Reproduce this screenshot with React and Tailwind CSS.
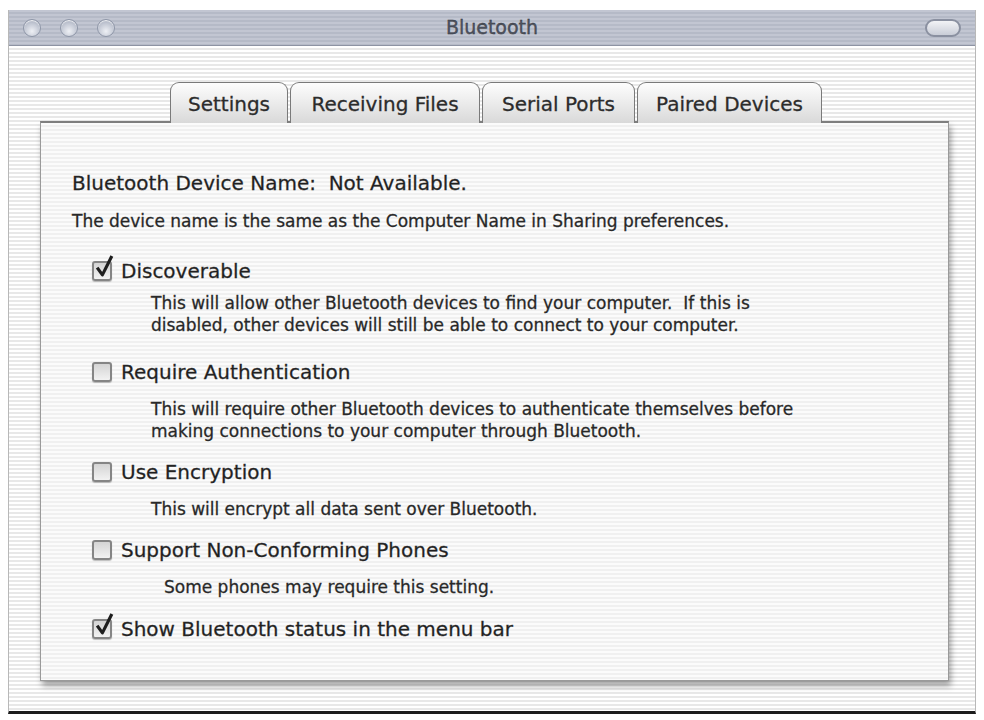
const stripes =
  "bg-[repeating-linear-gradient(180deg,#ffffff_0px,#ffffff_2px,#e8e8e8_2px,#e8e8e8_4px)]";

function Light() {
  return (
    <div className="h-[18px] w-[18px] rounded-full border border-[#8e96a8] bg-[radial-gradient(circle_at_50%_70%,#eef0f5_0%,#c3c8d4_55%,#9aa1b2_100%)] shadow-[inset_0_1px_1px_rgba(255,255,255,0.9)]" />
  );
}

function Check({ checked }) {
  return (
    <div className="relative h-[20px] w-[20px] shrink-0 rounded-[3px] border-2 border-[#858585] bg-[linear-gradient(180deg,#d4d4d4,#f2f2f2)] shadow-[0_1px_1px_rgba(0,0,0,0.25)]">
      {checked && (
        <svg viewBox="0 0 20 22" className="absolute -top-[9px] left-[0px] h-[25px] w-[21px]">
          <path d="M3 12 L8 19 L17 1" fill="none" stroke="#1e1e1e" strokeWidth="3" strokeLinejoin="round" />
        </svg>
      )}
    </div>
  );
}

function Option({ label, checked, lines, indent = "pl-[59px]", top, descTop = "mt-[14px]" }) {
  return (
    <div className={`pl-[20px] ${top}`}>
      <div className="flex items-center gap-[9px] text-[20px] leading-[24px] text-[#1f1f1f]">
        <Check checked={checked} />
        <span>{label}</span>
      </div>
      {lines && (
        <div className={`${descTop} ${indent} text-[17px] leading-[22px] text-[#262626]`}>
          {lines.map((l) => (
            <div key={l} className="whitespace-pre">{l}</div>
          ))}
        </div>
      )}
    </div>
  );
}

const tabs = [
  { name: "Settings", w: 118 },
  { name: "Receiving Files", w: 190 },
  { name: "Serial Ports", w: 153 },
  { name: "Paired Devices", w: 185 },
];

export default function App() {
  return (
    <div
      className="h-[720px] w-[984px] bg-white pt-[10px] pl-[8px] [-webkit-text-stroke:0.3px_#333]"
      style={{ fontFamily: '"DejaVu Sans", "Open Sans", sans-serif' }}
    >
      <div className="flex h-[704px] w-[968px] flex-col border-x border-[#b8b8b8] border-b-[3px] border-b-[#1c1c1c]">
        {/* title bar */}
        <div className="relative flex h-[36px] shrink-0 items-center border-b border-[#8d93a3] bg-[repeating-linear-gradient(180deg,#c2c6d2_0px,#c2c6d2_2px,#b5bac7_2px,#b5bac7_4px)] px-[14px]">
          <div className="flex gap-[19px]">
            <Light />
            <Light />
            <Light />
          </div>
          <div className="absolute inset-x-0 top-0 flex h-full items-center justify-center text-[19px] text-[#4c5262]">
            Bluetooth
          </div>
          <div className="ml-auto h-[18px] w-[36px] rounded-full border-2 border-[#8a90a0] bg-[linear-gradient(180deg,#f2f3f6,#c9cdd7)]" />
        </div>

        {/* body */}
        <div className={`flex-1 ${stripes} pl-[31px] pr-[27px] pt-[36px]`}>
          <div className="flex pl-[130px]">
            {tabs.map((t, i) => (
              <div
                key={t.name}
                style={{ width: t.w }}
                className={`relative z-10 -mb-[2px] flex h-[41px] items-center justify-center rounded-t-[9px] border border-b-0 border-[#7a7a7a] bg-[linear-gradient(180deg,#fdfdfd_0%,#ededed_45%,#d9d9d9_100%)] pt-[2px] text-[20px] text-[#2b2b2b] ${i > 0 ? "ml-[2px]" : ""}`}
              >
                {t.name}
              </div>
            ))}
          </div>
          <div className="h-[560px] w-[909px] border border-[#9a9a9a] border-t-2 border-t-[#7f7f7f] bg-[repeating-linear-gradient(180deg,#fbfbfb_0px,#fbfbfb_2px,#f0f0f0_2px,#f0f0f0_4px)] pl-[31px] pt-[48px] shadow-[2px_5px_6px_rgba(0,0,0,0.35)]">
            <div className="text-[20px] leading-[24px] text-[#1f1f1f]">
              Bluetooth Device Name:&nbsp; Not Available.
            </div>
            <div className="mt-[15px] text-[17px] leading-[22px] text-[#262626]">
              The device name is the same as the Computer Name in Sharing preferences.
            </div>
            <div className="flex flex-col">
              <Option
                top="mt-[27px]"
                descTop="mt-[9px]"
                label="Discoverable"
                checked
                lines={[
                  "This will allow other Bluetooth devices to find your computer.  If this is",
                  "disabled, other devices will still be able to connect to your computer.",
                ]}
              />
              <Option
                top="mt-[24px]"
                label="Require Authentication"
                lines={[
                  "This will require other Bluetooth devices to authenticate themselves before",
                  "making connections to your computer through Bluetooth.",
                ]}
              />
              <Option
                top="mt-[18px]"
                label="Use Encryption"
                lines={["This will encrypt all data sent over Bluetooth."]}
              />
              <Option
                top="mt-[18px]"
                label="Support Non-Conforming Phones"
                indent="pl-[72px]"
                lines={["Some phones may require this setting."]}
              />
              <Option top="mt-[19px]" label="Show Bluetooth status in the menu bar" checked />
            </div>
          </div>
        </div>
      </div>
    </div>
  );
}
